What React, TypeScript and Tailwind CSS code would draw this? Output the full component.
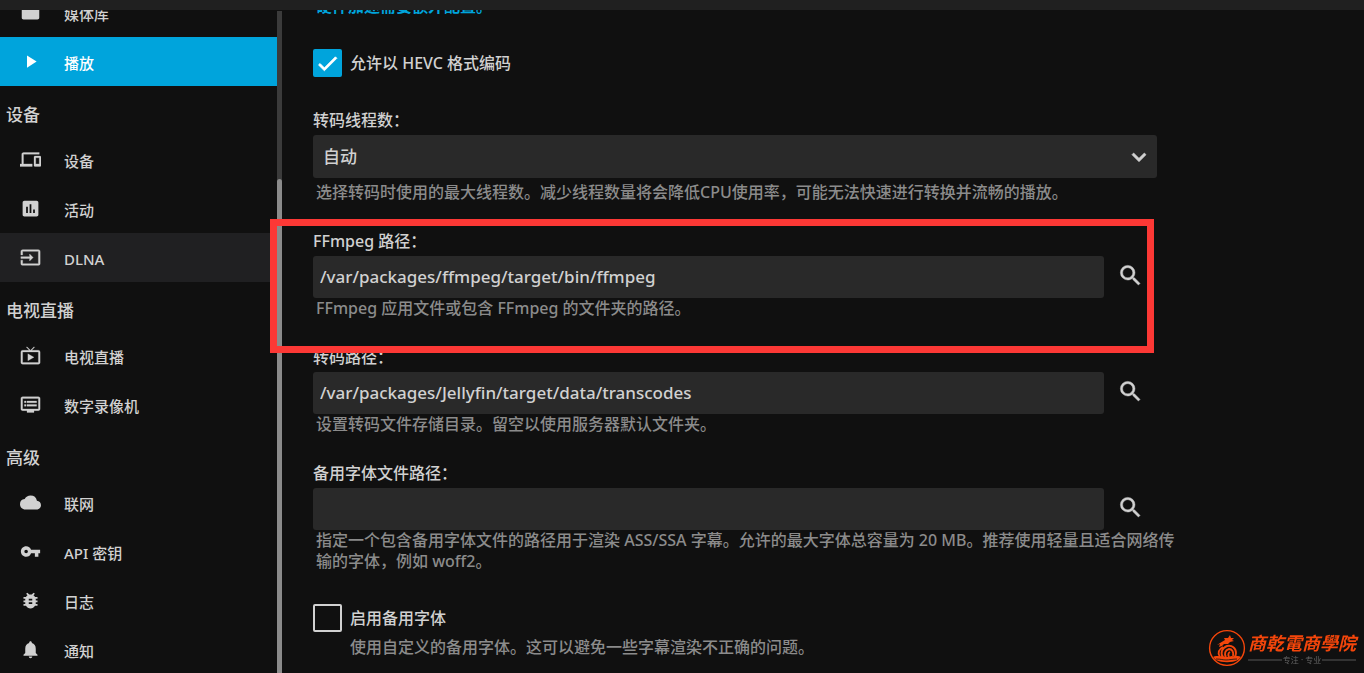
import { useState } from "react";
import type { ReactNode } from "react";
import type { IconType } from "react-icons";
import {
  MdAssessment,
  MdBugReport,
  MdCheck,
  MdCloud,
  MdDevices,
  MdDvr,
  MdFolder,
  MdInput,
  MdKeyboardArrowDown,
  MdLiveTv,
  MdNotifications,
  MdPlayArrow,
  MdSearch,
  MdVpnKey,
} from "react-icons/md";

type NavItem = { icon: IconType; label: string; state?: "active" | "hover"; stroke?: number };

const groups: { title?: string; items: NavItem[] }[] = [
  {
    items: [
      { icon: MdFolder, label: "媒体库" },
      { icon: MdPlayArrow, label: "播放", state: "active" },
    ],
  },
  {
    title: "设备",
    items: [
      { icon: MdDevices, label: "设备", stroke: 0.3 },
      { icon: MdAssessment, label: "活动" },
      { icon: MdInput, label: "DLNA", state: "hover", stroke: 0.4 },
    ],
  },
  {
    title: "电视直播",
    items: [
      { icon: MdLiveTv, label: "电视直播", stroke: 0.3 },
      { icon: MdDvr, label: "数字录像机", stroke: 0.3 },
    ],
  },
  {
    title: "高级",
    items: [
      { icon: MdCloud, label: "联网" },
      { icon: MdVpnKey, label: "API 密钥" },
      { icon: MdBugReport, label: "日志" },
      { icon: MdNotifications, label: "通知" },
    ],
  },
];

const rowStyles = {
  active: "bg-[#00a4dc] text-white",
  hover: "bg-[#202022]",
  idle: "hover:bg-[#202022]",
};

function Sidebar() {
  return (
    <div className="flex w-[282px] shrink-0 overflow-hidden">
      <nav className="-mt-[22px] flex-1">
        {groups.map((group, i) => (
          <div key={i}>
            {group.title && <h2 className="h-[49px] pt-[9px] pl-[6px] text-[17px] leading-[40px] font-medium">{group.title}</h2>}
            {group.items.map(({ icon: Icon, label, state, stroke }) => (
              <a key={label} href="#" className={`flex h-[49px] items-center pl-5 ${rowStyles[state ?? "idle"]}`}>
                <Icon size={21} strokeWidth={stroke ?? 0} strokeLinejoin="round" className="mb-px" />
                <span className="pt-1 pl-[23px] text-[15px] font-medium">{label}</span>
              </a>
            ))}
          </div>
        ))}
      </nav>
      <div className="mt-px w-[5px] bg-[#3b3b3b] pt-[168px]">
        <div className="h-full rounded-t-sm bg-[#8b8b8b]" />
      </div>
    </div>
  );
}

function PathField({ id, label, value, children }: { id: string; label: string; value: string; children: ReactNode }) {
  return (
    <div className="mb-7">
      <label htmlFor={id} className="mb-1 block">
        {label}
      </label>
      <div className="flex items-center">
        <input id={id} type="text" defaultValue={value} className="h-[42px] min-w-0 flex-1 rounded-[3px] bg-[#292929] px-[7px] pb-px text-[17px] font-medium outline-none" />
        <button type="button" aria-label="浏览" className="flex w-[53px] justify-center pb-[3px]">
          <MdSearch size={27} strokeWidth={0.4} />
        </button>
      </div>
      <p className="-mr-5 pl-[3px] text-[#8b8b8b]">{children}</p>
    </div>
  );
}

function Checkbox({ label, initial }: { label: string; initial: boolean }) {
  const [checked, setChecked] = useState(initial);
  return (
    <label className="flex h-7 items-center gap-2">
      <span className="grid place-items-center">
        <input
          type="checkbox"
          checked={checked}
          onChange={(e) => setChecked(e.target.checked)}
          className="col-start-1 row-start-1 h-7 w-[29px] appearance-none rounded-xs border-2 border-[#d1d1d1] checked:border-[#00a4dc] checked:bg-[#00a4dc]"
        />
        {checked && <MdCheck size={25} strokeWidth={0.8} className="pointer-events-none col-start-1 row-start-1 text-white" />}
      </span>
      {label}
    </label>
  );
}

function Brand() {
  return (
    <div className="fixed right-2 bottom-[6px] flex items-center gap-[2px] text-[#f4460b]">
      <svg width="38" height="38" viewBox="0 0 38 38" fill="none" stroke="currentColor">
        <circle cx="19" cy="19" r="17.4" strokeWidth="1.4" />
        <path d="M12 14 17 11l-1-2 4 0 2-3 1 3 3 0-2 2 2 1-4 1-2 2-4 0-2 2-3 1 1-3-3 1z" fill="currentColor" stroke="none" />
        <path d="M12 28c-3-4-1-8 3-10M15 28c-3-4-1-9 4-11 5-1 9 2 9 7 0 2-1 4-2 5M18 28c-2-3-1-7 3-8 3 0 5 3 4 7M21 28c-1-2-1-4 1-5" strokeWidth="1.9" />
        <path d="M5 28c3-2 6 0 9-1l5 1 5-1c3 1 6-1 9 1l-3 3c-6 3-16 3-22 0z" fill="currentColor" stroke="none" />
        <path d="M8 30c5 0 7 1 10 1s7-1 11-1" stroke="#101010" strokeWidth="0.8" />
      </svg>
      <div>
        <div className="text-lg leading-6 font-bold italic">商乾電商學院</div>
        <div className="flex items-center gap-px text-[8px] leading-[10px] text-[#666]">
          <span className="h-0.5 flex-1 bg-[#333]" />
          专注 · 专业
          <span className="h-0.5 flex-1 bg-[#333]" />
        </div>
      </div>
    </div>
  );
}

export default function App() {
  return (
    <div className="relative flex h-screen flex-col overflow-hidden bg-[#101010] font-['Noto_Sans','Noto_Sans_CJK_SC',sans-serif] text-base leading-[21px] text-[#d1d1d1]">
      <header className="h-[10px] shrink-0 bg-[#202020]" />
      {/* the Md icons carry an unfilled 24x24 frame that must not take the stroke */}
      <div className="flex min-h-0 flex-1 [&_path[fill=none]]:hidden">
        <Sidebar />
        <main className="min-w-0 flex-1 overflow-hidden pl-[31px]">
          <form className="-mt-[14px] max-w-[844px] font-medium">
            <a href="#" className="mb-8 block pl-[3px] font-bold text-[#00a4dc]">
              硬件加速需要额外配置。
            </a>

            <Checkbox label="允许以 HEVC 格式编码" initial />

            <div className="mt-[33px] mb-7">
              <label htmlFor="threads" className="mb-1 block">
                转码线程数：
              </label>
              <div className="relative">
                <select id="threads" className="h-[43px] w-full appearance-none rounded-[3px] bg-[#292929] px-[10px] text-[17px] outline-none">
                  <option>自动</option>
                </select>
                <MdKeyboardArrowDown size={28} strokeWidth={0.6} className="pointer-events-none absolute top-2 right-1" />
              </div>
              <p className="mt-1 pl-[3px] text-[#8b8b8b]">选择转码时使用的最大线程数。减少线程数量将会降低CPU使用率，可能无法快速进行转换并流畅的播放。</p>
            </div>

            <PathField id="ffmpeg" label="FFmpeg 路径：" value="/var/packages/ffmpeg/target/bin/ffmpeg">
              FFmpeg 应用文件或包含 FFmpeg 的文件夹的路径。
            </PathField>
            <PathField id="transcodes" label="转码路径：" value="/var/packages/Jellyfin/target/data/transcodes">
              设置转码文件存储目录。留空以使用服务器默认文件夹。
            </PathField>
            <PathField id="fonts" label="备用字体文件路径：" value="">
              指定一个包含备用字体文件的路径用于渲染 ASS/SSA 字幕。允许的最大字体总容量为 20 MB。推荐使用轻量且适合网络传输的字体，例如 woff2。
            </PathField>

            <div className="pt-1">
              <Checkbox label="启用备用字体" initial={false} />
              <p className="mt-[5px] pl-[37px] text-[#8b8b8b]">使用自定义的备用字体。这可以避免一些字幕渲染不正确的问题。</p>
            </div>
          </form>
        </main>
      </div>

      {/* callout around the FFmpeg path */}
      <div className="pointer-events-none absolute top-[219px] left-[270px] h-[134px] w-[884px] border-[7px] border-[#fc3835]" />
      <Brand />
    </div>
  );
}
